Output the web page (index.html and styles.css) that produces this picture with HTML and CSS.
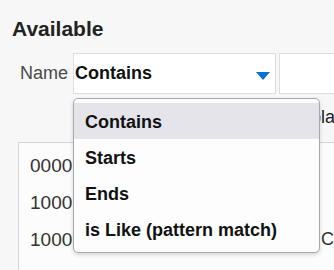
FILE: index.html
```html
<!DOCTYPE html>
<html>
<head>
    <title>Available</title>
    <link rel="stylesheet" href="styles.css">
</head>
<body>
    <div class="page">
        <!-- Header -->
        <h1 class="title">Available</h1>

        <!-- Filter row -->
        <div class="filter">
            <span class="filter-label">Name</span>
            <div class="select">
                <div class="select-field">
                    <span class="select-value">Contains</span>
                    <svg class="select-arrow" width="14" height="8" viewBox="0 0 14 8">
                        <polygon points="0,0 14,0 7,8" fill="#0572ce"/>
                    </svg>
                </div>

                <!-- Open dropdown -->
                <ul class="menu">
                    <li class="menu-item active">Contains</li>
                    <li class="menu-item">Starts</li>
                    <li class="menu-item">Ends</li>
                    <li class="menu-item">is Like (pattern match)</li>
                </ul>
            </div>
            <div class="search-field"></div>
        </div>

        <div class="meta">Display Name</div>

        <!-- Results table -->
        <div class="results">
            <div class="row"><span class="cell-id">00001</span><span class="cell-name"></span></div>
            <div class="row"><span class="cell-id">10001</span><span class="cell-name"></span></div>
            <div class="row"><span class="cell-id">10002</span><span class="cell-name">Customer</span></div>
        </div>
    </div>
</body>
</html>
```

FILE: styles.css
```css
body {
    margin: 0;
    background-color: #f7f7f7;
    font-family: "Liberation Sans", Arial, sans-serif;
    color: #333;
    overflow: hidden;
}
.page {
    padding: 17px 0 0 12px;
}
.title {
    margin: 0;
    font-size: 21px;
    line-height: 24px;
    font-weight: bold;
    color: #222;
}
.filter {
    display: flex;
    align-items: center;
    margin: 12px 0 0 8px;
}
.filter-label {
    flex-shrink: 0;
    font-size: 18px;
    color: #4a4a4a;
    width: 53px;
}
.select {
    position: relative;
    flex-shrink: 0;
}
.select-field {
    display: flex;
    align-items: center;
    justify-content: space-between;
    width: 195px;
    height: 39px;
    padding: 0 5px 0 1px;
    box-sizing: content-box;
    background-color: #fff;
    border: 1px solid #dedede;
}
.select-value {
    font-size: 18px;
    font-weight: bold;
    color: #111;
}
.select-arrow {
    margin-top: 4px;
}
.search-field {
    flex-shrink: 0;
    width: 80px;
    height: 39px;
    margin-left: 3px;
    background-color: #fff;
    border: 1px solid #dedede;
}
.menu {
    position: absolute;
    top: 45px;
    left: 0;
    width: 245px;
    margin: 0;
    padding: 4px 0 5px;
    list-style: none;
    background-color: #fdfdfd;
    border: 1px solid #a8a8a8;
    border-radius: 5px;
    box-shadow: 0 2px 4px rgba(0, 0, 0, 0.15);
    z-index: 2;
}
.menu-item {
    height: 34px;
    line-height: 34px;
    padding: 2px 0 0 11px;
    font-size: 18px;
    font-weight: bold;
    color: #111;
}
.menu-item.active {
    background-color: #e4e4ea;
}
.meta {
    margin-top: 11px;
    padding-left: 273px;
    font-size: 18px;
    line-height: 24px;
    color: #222;
    white-space: nowrap;
}
.results {
    margin: 13px 0 0 6px;
    width: 340px;
    height: 140px;
    padding-top: 4px;
    background-color: #fcfcfc;
    border: 1px solid #d4d4d4;
}
.row {
    display: flex;
    height: 37px;
    line-height: 37px;
    font-size: 19px;
    color: #333;
    white-space: nowrap;
}
.cell-id {
    flex-shrink: 0;
    width: 291px;
    padding-left: 11px;
}
.cell-name {
    font-size: 18px;
}
```
